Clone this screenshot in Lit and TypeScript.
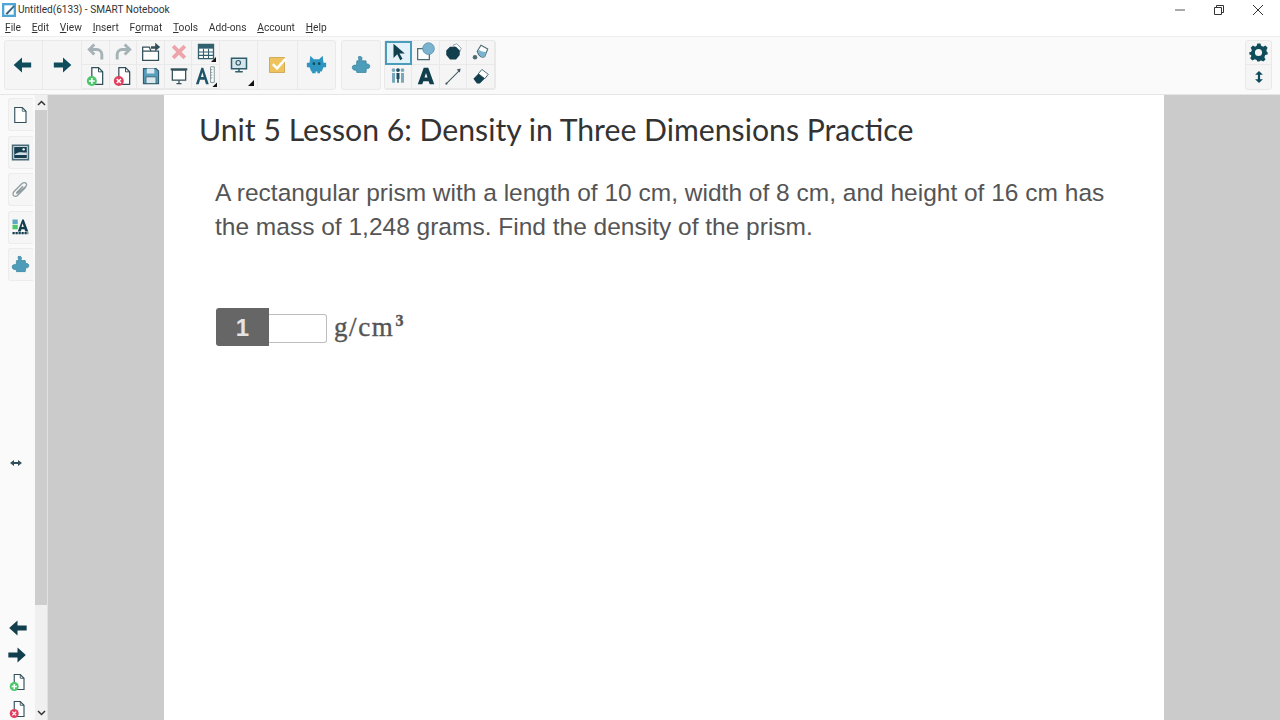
import { LitElement, html, css, svg } from "lit";
import { customElement } from "lit/decorators.js";

const D = "#0f4c5c";
const ic = (w: number, h: number, body: unknown, vb = "0 0 24 24") =>
  html`<svg width=${w} height=${h} viewBox=${vb} fill="none">${body}</svg>`;

const arrowL = (c = D) => svg`<path d="M2 12 12 3v6h11v6H12v6z" fill=${c}/>`;
const arrowR = (c = D) => svg`<path d="M22 12 12 3v6H1v6h11v6z" fill=${c}/>`;
const docBase = svg`<path d="M7 2h8l5 5v15H7z" fill="#fff" stroke="#33505a" stroke-width="1.500"/><path d="M15 2v5h5" stroke="#33505a" stroke-width="1.200"/>`;
const docAdd = svg`${docBase}<circle cx="7" cy="18" r="6" fill="#4cc76a"/><path d="M3.500 18h7M7 14.500v7" stroke="#fff" stroke-width="2"/>`;
const docDel = svg`${docBase}<circle cx="7" cy="18" r="6" fill="#e0405e"/><path d="m4.500 15.500 5 5m0-5-5 5" stroke="#fff" stroke-width="1.800"/>`;
const puzzle = svg`<path d="M9 2c3-1 5 .5 4 3-.3 1-.4 1.500 0 2h5l.5 4c2-1 4.500.5 4 3s-3 2.500-4 2l-.5 5H7l-.5-3c-2.500 1-5-.5-5-3s2.500-3.500 5-2.500L7 7h2.500C10 6 8.500 4 9 2z" fill="#4d9dba" stroke="#2f7b96" stroke-width=".8"/>`;

const gridIcons = [
  ic(20, 20, svg`<path d="M10 3 4 9l6 6M4 9h9a6 6 0 0 1 6 6v6" stroke="#a5b3b6" stroke-width="3.500"/>`),
  ic(20, 20, svg`<path d="m14 3 6 6-6 6M20 9h-9a6 6 0 0 0-6 6v6" stroke="#a5b3b6" stroke-width="3.500"/>`),
  ic(20, 20, svg`<path d="M2 11h19v11H2zM2 11V6h8l2 5" stroke="#33505a" stroke-width="1.500" fill="#fff"/><path d="M12 5h5V1l6 5-6 5V8h-5z" fill="#33505a"/>`),
  ic(20, 20, svg`<path d="m5 5 14 14M19 5 5 19" stroke="#eda4aa" stroke-width="4.500"/>`),
  ic(20, 20, svg`<path d="M3 3h18v17H3z" fill="#fff" stroke="#33606e" stroke-width="1.600"/><path d="M3 3h18v5H3z" fill="#33606e"/><path d="M3 12h18M3 16h18M9 8v12M15 8v12" stroke="#33606e" stroke-width="1.300"/><path d="M24 18v6h-6z" fill="#111"/>`),
  ic(20, 20, docAdd),
  ic(20, 20, docDel),
  ic(20, 20, svg`<path d="M3 3h15l3 3v15H3z" fill="#5b9fc0" stroke="#33606e" stroke-width="1.500"/><path d="M7 3h9v6H7z" fill="#dbe9ef"/><path d="M6 13h12v8H6z" fill="#dbe9ef" stroke="#33606e"/>`),
  ic(20, 20, svg`<path d="M2 4h20" stroke="#33505a" stroke-width="2.500"/><path d="M4 5h16v12H4z" stroke="#33505a" stroke-width="1.500" fill="#fff"/><path d="M12 17v4M9 21h6" stroke="#33505a" stroke-width="1.500"/>`),
  ic(22, 22, svg`<path d="M1 21 7 3h2l6 18h-3l-1.500-5h-5L4 21zM6.500 13h3L8 8z" fill="#1e5468"/><path d="M17 2h4v17h-4z" fill="#fff" stroke="#7c8f95"/><path d="M17 5h2M17 8h2M17 11h2M17 14h2" stroke="#7c8f95"/><path d="M24 19v5h-5z" fill="#111"/>`),
];
const toolIcons = [
  ic(18, 18, svg`<path d="M6 1v19l5-5 4 8 3-2-4-7h7z" fill="#123f4d"/>`),
  ic(20, 20, svg`<path d="M2 8h14v13H2z" fill="#fff" stroke="#4d6a73" stroke-width="1.500"/><circle cx="15" cy="8" r="7" fill="#79b3cf" stroke="#5a93ad"/>`),
  ic(18, 18, svg`<path d="m12 3 5-2 6 6-2 5z" fill="#fff" stroke="#789"/><path d="M8 5h8l5 5v6l-5 6H8l-5-6v-6z" fill="#123f4d"/>`),
  ic(18, 18, svg`<path d="m7 11 5-8 9 5-4 10c-3 2-8 0-10-7z" fill="#fff" stroke="#4d6a73" stroke-width="1.500"/><path d="M9 9c3 2 6 3 10 3l-2 6c-3 2-7 0-9-7z" fill="#79b3cf"/><circle cx="4" cy="19" r="3" fill="#4d6a73"/>`),
  ic(18, 18, svg`<path d="M4 8h4v13H4zM16 8h4v13h-4z" fill="#79a8bc"/><path d="M10 8h4v8h-1v5h-2v-5h-1z" fill="#1c4f60"/><circle cx="6" cy="4" r="2.500" fill="#79a8bc"/><circle cx="12" cy="4" r="2.500" fill="#1c4f60"/><circle cx="18" cy="4" r="2.500" fill="#79a8bc"/>`),
  ic(18, 18, svg`<path d="M1 23 9 1h6l8 22h-6l-1.500-4h-7L7 23zM10 14h4l-2-6z" fill="#123f4d"/>`),
  ic(19, 19, svg`<path d="M3 21 20 4" stroke="#445a62" stroke-width="1.300"/><path d="m16 3 5-1-1 5z" fill="#445a62"/><circle cx="3" cy="21" r="1.300" fill="#445a62"/>`),
  ic(17, 17, svg`<path d="m2 15 11-11 9 7-11 11H7z" fill="#123f4d"/><path d="m9 8 5-6 9 7-5 6z" fill="#fff" stroke="#123f4d"/>`),
];

@customElement("app-root")
export class AppRoot extends LitElement {
  static styles = css`
    :host { display: block; width: 1280px; height: 720px; overflow: hidden; background: #fff; font-family: Roboto, "Noto Sans", sans-serif; }
    .app { display: flex; flex-direction: column; height: 720px; filter: blur(0.5px); }
    .title { height: 19px; display: flex; align-items: center; font-size: 10.100px; color: #333; padding: 0 2.500px 0 2px; gap: 2px; background: #fff; flex: none; }
    .title span { flex: 1; }
    .win { display: flex; align-items: center; }
    .win i { width: 39px; height: 19px; display: flex; align-items: center; justify-content: center; }
    .menu { height: 17px; display: flex; gap: 10.800px; padding-left: 5px; align-items: center; font-size: 10.200px; color: #333; border-bottom: 1px solid #eee; flex: none; }
    .bar { height: 58px; flex: none; display: flex; align-items: center; padding: 0 8px 2px 4px; background: #fafafa; border-bottom: 1px solid #e6e6e6; box-sizing: border-box; }
    .grp { height: 50px; display: flex; background: #f5f5f5; border: 1px solid #e9e9e9; border-radius: 3px; box-sizing: border-box; }
    .cell { display: flex; align-items: center; justify-content: center; border-right: 1px solid #e9e9e9; box-sizing: border-box; position: relative; }
    .a1 { width: 38px; padding-right: 3px; } .a2 { width: 39px; padding-left: 1px; } .a3 { width: 38px; padding-left: 1px; } .a4 { width: 40px; } .a5 { width: 37px; border-right: 0; padding-left: 1px; }
    .a6 { width: 38px; border-right: 0; }
    .g5 { display: grid; grid-template-columns: repeat(5, 27.600px); grid-template-rows: 24px 24px; }
    .g4 { display: grid; grid-template-columns: repeat(4, 27.500px); grid-template-rows: 24px 24px; }
    .g5 .cell, .g4 .cell { border-bottom: 1px solid #e9e9e9; }
    .g5 .cell { padding-left: 1px; }
    .cell.sel { background: #e3f1f8; outline: 2px solid #4a9cbd; outline-offset: -2px; }
    .tri { position: absolute; right: 3px; bottom: 3px; width: 0; height: 0; border-left: 6px solid transparent; border-bottom: 6px solid #111; }
    .spacer { flex: 1; }
    .gap5 { width: 5px; } .gap3 { width: 3px; }
    .right { width: 27px; flex-direction: column; }
    .right .cell { flex: 1; border-right: 0; width: 100%; }
    .right .cell:first-child { border-bottom: 1px solid #e9e9e9; }
    .main { flex: 1; display: grid; grid-template-columns: 35px 13px 116px 1000px 116px; min-height: 0; }
    .side { background: #fafafa; display: flex; flex-direction: column; padding: 3px 0 0 8px; box-sizing: border-box; }
    .tab { width: 25px; height: 33px; margin-bottom: 4.500px; padding-right: 2px; background: #f6f6f6; border: 1px solid #ececec; border-right: 0; border-radius: 3px 0 0 3px; box-sizing: border-box; display: flex; align-items: center; justify-content: center; flex: none; }
    .resize { margin: 169px 0 0 2px; height: 16px; display: flex; align-items: center; flex: none; }
    .nav { margin-top: auto; margin-left: -8px; display: flex; flex-direction: column; align-items: center; gap: 4px; width: 35px; height: 104px; }
    .nav i { height: 23px; display: flex; align-items: center; }
    .scroll { background: #f0f0f0; display: flex; flex-direction: column; border-right: 1px solid #e2e2e2; box-sizing: border-box; }
    .scroll .btn { height: 15px; display: flex; align-items: center; justify-content: center; flex: none; }
    .thumb { height: 495px; background: #cdcdcd; flex: none; }
    .track { flex: 1; }
    .gutter { background: #cbcbcb; }
    .page { background: #fff; padding: 13px 0 0 35px; color: #222; }
    h1 { margin: 0; font-size: 30.200px; font-weight: 400; line-height: 42px; font-family: Lato, "Open Sans", sans-serif; color: #333; white-space: nowrap; }
    .q { margin: 26px 0 0 16px; font: 24.500px/34px "Liberation Sans", Arial, sans-serif; color: #555; width: 910px; }
    .ans { margin: 64px 0 0 17px; display: flex; align-items: center; height: 38px; }
    .num { width: 53px; height: 38px; padding-top: 2px; box-sizing: border-box; background: #666; color: #e4e4e4; font: bold 24px "Liberation Sans", sans-serif; display: flex; align-items: center; justify-content: center; border-radius: 3px 0 0 3px; }
    .box { width: 58px; height: 29px; margin-top: 2px; border: 1px solid #bdbdbd; border-left: 0; border-radius: 0 3px 3px 0; box-sizing: border-box; background: #fff; }
    .unit { margin: 1px 0 0 7px; font: 27px "Liberation Serif", "DejaVu Serif", serif; letter-spacing: 1.600px; color: #555; -webkit-text-stroke: 0.400px #555; }
    .unit sup { font-size: 16px; font-weight: bold; line-height: 0; margin-left: 1px; }
  `;
  render() {
    const menus: [string, string, string][] = [["", "F", "ile"], ["", "E", "dit"], ["", "V", "iew"], ["", "I", "nsert"], ["F", "o", "rmat"], ["", "T", "ools"], ["Add-ons", "", ""], ["", "A", "ccount"], ["", "H", "elp"]];
    return html`<div class="app">
      <div class="title">
        ${ic(14, 14, svg`<rect width="24" height="24" fill="#4fa6d6"/><rect x="4" y="4" width="16" height="16" fill="#fff"/><path d="M6 18 20 4l2 2L9 20z" fill="#39647c"/>`)}
        <span>Untitled(6133) - SMART Notebook</span>
        <div class="win">
          <i>${ic(10, 10, svg`<path d="M0 5h10" stroke="#555"/>`, "0 0 10 10")}</i>
          <i>${ic(10, 10, svg`<path d="M.5 2.500h7v7h-7zM2.500 2.500V.5h7v7h-2" stroke="#333"/>`, "0 0 10 10")}</i>
          <i>${ic(10, 10, svg`<path d="m0 0 10 10M10 0 0 10" stroke="#333"/>`, "0 0 10 10")}</i>
        </div>
      </div>
      <div class="menu">${menus.map(([a, u, b]) => html`<span>${a}${u ? html`<u>${u}</u>` : ""}${b}</span>`)}</div>
      <div class="bar">
        <div class="grp">
          <div class="cell a1">${ic(20, 20, arrowL())}</div>
          <div class="cell a2">${ic(20, 20, arrowR())}</div>
          <div class="g5">${gridIcons.map((i) => html`<div class="cell">${i}</div>`)}</div>
          <div class="cell a3">${ic(18, 18, svg`<path d="M2 3h20v14H2z" fill="#d5e5ea" stroke="#2f5d6b" stroke-width="2"/><circle cx="11" cy="9" r="3" stroke="#2f5d6b" stroke-width="1.500"/><path d="M7 21h10M12 17v4" stroke="#2f5d6b" stroke-width="2"/>`)}<span class="tri"></span></div>
          <div class="cell a4">${ic(20, 20, svg`<path d="M3 3h18v18H3z" fill="#eec25c" stroke="#c9a24a"/><path d="m7 11 5 5 10-11" stroke="#fff" stroke-width="3"/>`)}</div>
          <div class="cell a5">${ic(21, 21, svg`<path d="M5 2l4 4h6l4-4 1 8h3v5h-3l-2 5h-2v2h-3v-2h-2v2H7v-2H6l-2-5H1v-5h3z" fill="#2e94c0"/><circle cx="9" cy="11" r="1.500" fill="#0f4c5c"/><circle cx="15" cy="11" r="1.500" fill="#0f4c5c"/>`)}</div>
        </div>
        <div class="gap5"></div>
        <div class="grp"><div class="cell a6">${ic(20, 20, puzzle)}</div></div>
        <div class="gap3"></div>
        <div class="grp"><div class="g4">${toolIcons.map((i, n) => html`<div class="cell ${n === 0 ? "sel" : ""}">${i}</div>`)}</div></div>
        <div class="spacer"></div>
        <div class="grp right">
          <div class="cell">${ic(19, 19, svg`<path d="M10 1h4l.8 3 2.600 1.100 2.800-1.500 2.800 2.800-1.500 2.800L22 11.800l1 .2v3l-3 .8-1.100 2.600 1.500 2.800-2.800 2.800-2.800-1.500-1.800.8L13 24h-3l-.8-1.900-2.600-1.100-2.800 1.500-2.800-2.800 1.500-2.800L2 15.800 0 15v-3l2-.2 1.100-2.600-1.500-2.800 2.800-2.800 2.800 1.500L9.200 4z" fill="#0f4c5c" transform="translate(.5 -.5)"/><circle cx="12" cy="12" r="4.500" fill="#f5f5f5"/>`)}</div>
          <div class="cell">${ic(10, 14, svg`<path d="M12 1l7 7h-5v8h5l-7 7-7-7h5V8H5z" fill="#0f4c5c"/>`, "3 0 18 24")}</div>
        </div>
      </div>
      <div class="main">
        <div class="side">
          <div class="tab">${ic(18, 18, svg`<path d="M5 2h10l5 5v15H5z" fill="#fff" stroke="#33505a" stroke-width="1.500"/><path d="M15 2v5h5" stroke="#33505a"/>`)}</div>
          <div class="tab">${ic(19, 19, svg`<path d="M2 3h20v18H2z" fill="#fff" stroke="#4a6b78" stroke-width="2"/><path d="M4 5h16v14H4z" fill="#173f4f"/><path d="M4 15c6-5 10-3 16-3v3z" fill="#cfe0e6"/><circle cx="16" cy="8" r="1.500" fill="#fff"/>`)}</div>
          <div class="tab">${ic(18, 18, svg`<path d="M20 8 9 19c-2 2-5 2-6 0s0-4 1-5L15 3c2-1 4-1 5 0s1 3 0 4L9 16c-1 1-2 0-1-1l8-8" stroke="#8f9da2" stroke-width="1.800"/>`)}</div>
          <div class="tab">${ic(18, 18, svg`<path d="M2 2h7v6H2z" fill="#5fa8c4"/><path d="M2 9h7v6H2z" fill="#4cc76a"/><path d="M9 18 15 2h2l6 16h-4l-1-3h-4l-1 3zM14 12h3l-1.500-5z" fill="#123f4d"/><path d="M2 20h21" stroke="#123f4d" stroke-width="3" stroke-dasharray="3 1"/>`)}</div>
          <div class="tab">${ic(19, 19, puzzle)}</div>
          <div class="resize">${ic(12, 8, svg`<path d="M0 4l4-3v2h4V1l4 3-4 3V5H4v2z" fill="#33505a"/>`, "0 0 12 8")}</div>
          <div class="nav">
            <i>${ic(21, 20, arrowL("#123f4d"))}</i>
            <i>${ic(21, 20, arrowR("#123f4d"))}</i>
            <i>${ic(18, 18, docAdd)}</i>
            <i>${ic(18, 18, docDel)}</i>
          </div>
        </div>
        <div class="scroll">
          <div class="btn">${ic(9, 6, svg`<path d="M1 5l3.500-3.500L8 5" stroke="#333" stroke-width="1.500"/>`, "0 0 9 6")}</div>
          <div class="thumb"></div>
          <div class="track"></div>
          <div class="btn">${ic(9, 6, svg`<path d="M1 1l3.500 3.500L8 1" stroke="#333" stroke-width="1.500"/>`, "0 0 9 6")}</div>
        </div>
        <div class="gutter"></div>
        <div class="page">
          <h1>Unit 5 Lesson 6: Density in Three Dimensions Practice</h1>
          <div class="q">A rectangular prism with a length of 10 cm, width of 8 cm, and height of 16 cm has the mass of 1,248 grams. Find the density of the prism.</div>
          <div class="ans"><div class="num">1</div><div class="box"></div><div class="unit">g/cm<sup>3</sup></div></div>
        </div>
        <div class="gutter"></div>
      </div>
    </div>`;
  }
}
